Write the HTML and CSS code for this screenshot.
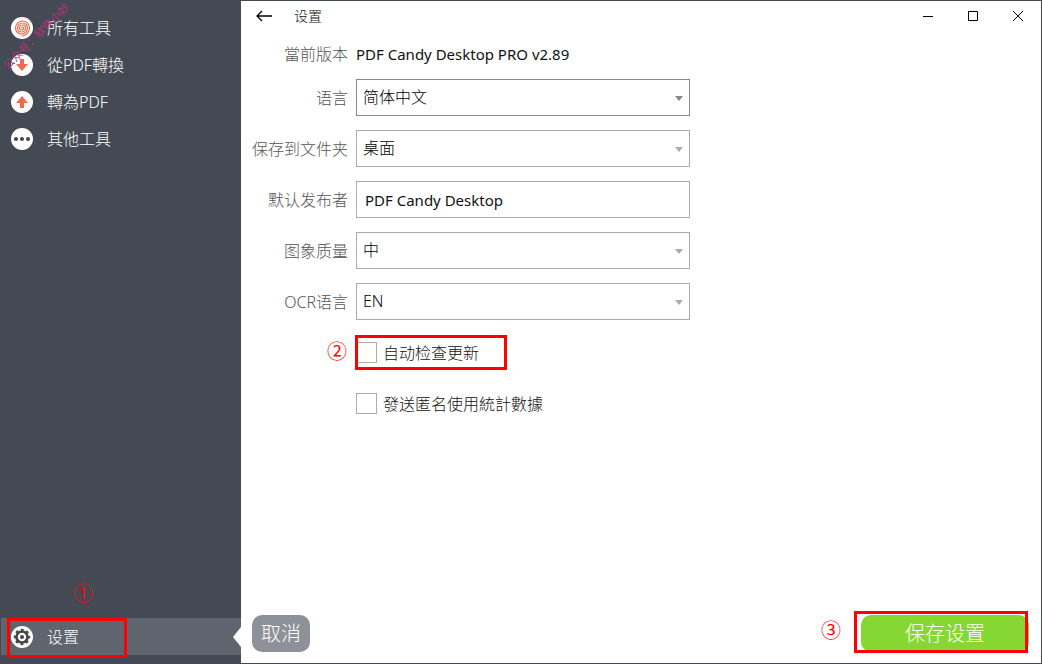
FILE: index.html
```html
<!DOCTYPE html>
<html lang="zh">

<head>
  <meta charset="UTF-8">
  <meta name="viewport" content="width=device-width, initial-scale=1.0">
  <title>设置</title>
  <link rel="stylesheet" href="styles.css">
</head>

<body>
  <nav class="sidebar">
    <a href="#all" class="nav-item">
      <svg class="nav-icon" viewBox="0 0 22 22">
        <circle cx="11" cy="11" r="11" fill="#fff" />
        <path d="M10.500 11a1 1 0 0 1 2 0a2 2 0 0 1-4 0a3 3 0 0 1 6 0a4 4 0 0 1-8 0a5 5 0 0 1 10 0a6 6 0 0 1-12 0a7 7 0 0 1 14 0a8 8 0 0 1-8 8" fill="none" stroke="#ee6a50" stroke-width="1.200" />
      </svg>
      <span>所有工具</span>
    </a>
    <a href="#from-pdf" class="nav-item">
      <svg class="nav-icon" viewBox="0 0 22 22">
        <circle cx="11" cy="11" r="11" fill="#fff" />
        <path d="M9 5h4v5h4l-6 7-6-7h4z" fill="#ee6a50" />
      </svg>
      <span>從PDF轉換</span>
    </a>
    <a href="#to-pdf" class="nav-item">
      <svg class="nav-icon" viewBox="0 0 22 22">
        <circle cx="11" cy="11" r="11" fill="#fff" />
        <path d="M9 17h4v-5h4l-6-7-6 7h4z" fill="#ee6a50" />
      </svg>
      <span>轉為PDF</span>
    </a>
    <a href="#other" class="nav-item">
      <svg class="nav-icon" viewBox="0 0 22 22">
        <circle cx="11" cy="11" r="11" fill="#fff" />
        <g fill="#444">
          <circle cx="5" cy="11" r="2" />
          <circle cx="11" cy="11" r="2" />
          <circle cx="17" cy="11" r="2" />
        </g>
      </svg>
      <span>其他工具</span>
    </a>
    <a href="#settings" class="nav-item active">
      <svg class="nav-icon" viewBox="0 0 22 22">
        <circle cx="11" cy="11" r="11" fill="#fff" />
        <g fill="none" stroke="#444">
          <circle cx="11" cy="11" r="5.500" stroke-width="2.600" />
          <circle cx="11" cy="11" r="7.200" stroke-width="2" stroke-dasharray="2.800 2.855" stroke-dashoffset="1.400" />
        </g>
        <circle cx="11" cy="11" r="2" fill="#444" />
      </svg>
      <span>设置</span>
      <span class="mark-box mark-settings"></span>
      <span class="mark-number number-one">①</span>
    </a>
    <span class="watermark">公众号：软件小妙</span>
  </nav>

  <main class="content">
    <header class="titlebar">
      <button class="icon-button" aria-label="返回">
        <svg width="18" height="14" viewBox="0 0 18 14"><path d="M17 7H2M7 2L2 7l5 5" fill="none" stroke="#000" stroke-width="1.300" /></svg>
      </button>
      <h1>设置</h1>
      <div class="window-buttons">
        <button class="icon-button" aria-label="最小化">
          <svg width="12" height="12" viewBox="0 0 12 12"><path d="M1 6.500h10" stroke="#000" /></svg>
        </button>
        <button class="icon-button" aria-label="最大化">
          <svg width="12" height="12" viewBox="0 0 12 12"><path d="M1.500 1.500h9v9h-9z" fill="none" stroke="#000" /></svg>
        </button>
        <button class="icon-button" aria-label="关闭">
          <svg width="12" height="12" viewBox="0 0 12 12"><path d="M1 1l10 10M11 1L1 11" stroke="#000" /></svg>
        </button>
      </div>
    </header>

    <form class="settings" id="settingsForm">
      <span class="label">當前版本</span>
      <span class="version">PDF Candy Desktop PRO v2.89</span>

      <label class="label" for="language">语言</label>
      <div class="select-box focused">
        <select id="language">
          <option>简体中文</option>
        </select>
      </div>

      <label class="label" for="folder">保存到文件夹</label>
      <div class="select-box">
        <select id="folder">
          <option>桌面</option>
        </select>
      </div>

      <label class="label" for="publisher">默认发布者</label>
      <input class="text-box" type="text" id="publisher" value="PDF Candy Desktop">

      <label class="label" for="quality">图象质量</label>
      <div class="select-box">
        <select id="quality">
          <option>中</option>
        </select>
      </div>

      <label class="label" for="ocr">OCR语言</label>
      <div class="select-box">
        <select id="ocr">
          <option>EN</option>
        </select>
      </div>

      <div class="check-row">
        <input type="checkbox" id="updates">
        <label for="updates">自动检查更新</label>
        <span class="mark-box mark-updates"></span>
        <span class="mark-number number-two">②</span>
      </div>
      <div class="check-row">
        <input type="checkbox" id="stats">
        <label for="stats">發送匿名使用統計數據</label>
      </div>
    </form>

    <footer class="actions">
      <button class="cancel">取消</button>
      <div class="save-wrap">
        <button class="save" form="settingsForm">保存设置</button>
        <span class="mark-box mark-save"></span>
        <span class="mark-number number-three">③</span>
      </div>
    </footer>
  </main>
</body>

</html>
```
FILE: styles.css
```css
* {
  box-sizing: border-box;
}

body {
  margin: 0;
  min-height: 100vh;
  display: flex;
  border: 1px solid #444a54;
  background: #fff;
  font-family: "Noto Sans", "Noto Sans CJK SC", sans-serif;
  font-size: 16px;
  font-weight: 300;
  line-height: 24px;
  color: #111;
}

button,
input,
select {
  font: inherit;
  color: inherit;
}

button {
  cursor: pointer;
}

.sidebar {
  position: relative;
  flex: 0 0 240px;
  display: flex;
  flex-direction: column;
  padding: 8px 0;
  background: #444a54;
}

.nav-item {
  position: relative;
  display: flex;
  align-items: center;
  gap: 14px;
  height: 37px;
  padding-left: 10px;
  color: #fff;
  text-decoration: none;
}

.nav-icon {
  width: 22px;
  height: 22px;
}

.nav-item.active {
  margin-top: auto;
  background: #5e656f;
}

.nav-item.active::after {
  content: '';
  position: absolute;
  right: 0;
  top: 9px;
  border: 10px solid transparent;
  border-left: 0;
  border-right: 8px solid #fff;
}

.watermark {
  position: absolute;
  left: -9px;
  top: 27px;
  font-size: 11px;
  font-weight: 400;
  line-height: 16px;
  white-space: nowrap;
  color: #b92d7c;
  transform: rotate(-45deg);
  pointer-events: none;
}

.content {
  flex: 1;
  display: flex;
  flex-direction: column;
  padding: 0 12px 11px 11px;
}

.titlebar {
  display: flex;
  align-items: center;
  height: 30px;
}

.titlebar h1 {
  margin: 0 0 0 18px;
  font-size: 14px;
  font-weight: 300;
}

.icon-button {
  display: flex;
  align-items: center;
  justify-content: center;
  padding: 0 3px;
  border: 0;
  background: none;
}

.window-buttons {
  display: flex;
  gap: 27px;
  margin-left: auto;
  padding-right: 2px;
}

/* form */
.settings {
  display: grid;
  grid-template-columns: 96px minmax(0, 334px);
  grid-template-rows: 22px;
  grid-auto-rows: 37px;
  gap: 14px 8px;
  margin-top: 12px;
}

.label {
  align-self: center;
  text-align: right;
  white-space: nowrap;
  color: #555;
}

.version {
  align-self: center;
}

.version,
.text-box {
  font-size: 15px;
  font-weight: 400;
}

.select-box {
  position: relative;
}

.select-box select {
  width: 100%;
  height: 100%;
  padding: 0 24px 2px 6px;
  appearance: none;
  border: 1px solid #acacac;
  border-radius: 0;
  background: #fff;
  color: #000;
}

.select-box::after {
  content: '';
  position: absolute;
  right: 7px;
  top: 17px;
  border: 4px solid transparent;
  border-top: 5px solid #acacac;
  border-bottom: 0;
  pointer-events: none;
}

.select-box.focused select {
  border-color: #888;
}

.select-box.focused::after {
  border-top-color: #888;
}

.text-box {
  width: 100%;
  padding: 0 8px;
  border: 1px solid #acacac;
  background: #fff;
}

.check-row {
  grid-column: 2;
  position: relative;
  display: flex;
  align-items: center;
  gap: 6px;
}

.check-row input {
  width: 21px;
  height: 21px;
  margin: 0;
  appearance: none;
  border: 1px solid #acacac;
  background: #fff;
}

.check-row input:checked {
  background: #87d733;
}

/* buttons */
.actions {
  display: flex;
  justify-content: space-between;
  margin-top: auto;
}

.actions button {
  height: 37px;
  padding: 0 9px;
  border: 0;
  border-radius: 10px;
  font-size: 20px;
  color: #fff;
}

.actions .cancel {
  background: #8e9199;
}

.save-wrap {
  position: relative;
}

.actions .save {
  width: 168px;
  background: #87d733;
}

/* red markers */
.mark-box {
  position: absolute;
  border: 3px solid #f00;
  pointer-events: none;
}

.mark-settings {
  left: 6px;
  top: 0;
  width: 120px;
  height: 40px;
}

.mark-updates {
  left: -1px;
  top: 1px;
  width: 152px;
  height: 35px;
}

.mark-save {
  left: -7px;
  top: -4px;
  width: 174px;
  height: 42px;
}

.mark-number {
  position: absolute;
  font-family: "Noto Sans CJK SC", sans-serif;
  font-size: 20px;
  font-weight: 400;
  color: #f00;
}

.number-one {
  left: 72px;
  top: -37px;
}

.number-two {
  left: -29px;
  top: 5px;
}

.number-three {
  left: -40px;
  top: 3px;
}
```
